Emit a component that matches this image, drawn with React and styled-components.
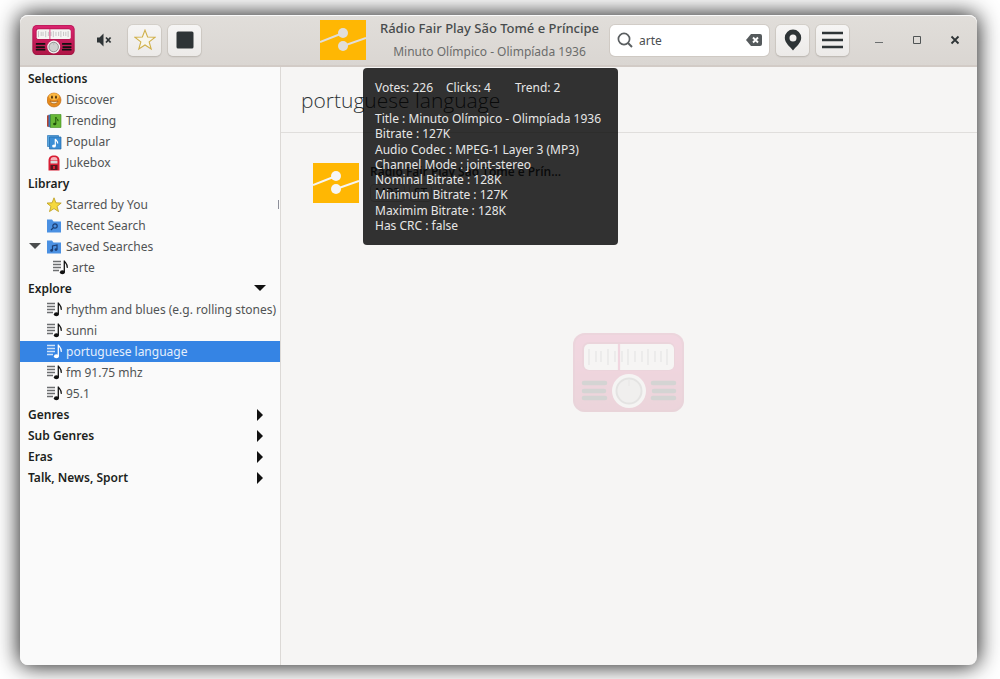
import React from "react";
import styled, { createGlobalStyle, css } from "styled-components";

const GlobalStyle = createGlobalStyle`
  *, *::before, *::after { box-sizing: border-box; }
  body {
    margin: 0;
    background: #fff;
    color: #2e3436;
    font-family: "Noto Sans", "Open Sans", sans-serif;
    font-size: 12px;
  }
  button, input { font: inherit; color: inherit; }
  h1, h2, p, ul { margin: 0; padding: 0; }
  ul { list-style: none; }
`;

const Page = styled.div`
  display: flex;
  min-height: 100vh;
  padding: 15px 23px 14px 20px;
`;

const Window = styled.div`
  flex: 1;
  min-width: 0;
  display: flex;
  flex-direction: column;
  border-radius: 8px;
  background: #f6f5f4;
  box-shadow: 0 0 22px 1px rgba(0, 0, 0, 0.9);
`;

const HeaderBar = styled.header`
  display: flex;
  align-items: center;
  gap: 7px;
  height: 52px;
  padding: 0 13px 0 12px;
  border-bottom: 2px solid #d2cbc6;
  border-radius: 8px 8px 0 0;
  background: linear-gradient(#e1deda, #dad6d2);
  box-shadow: inset 0 1px #fafafa;
`;

const Logo = styled.div`
  display: flex;
  width: 47px;
`;

const FlatButton = styled.button`
  display: flex;
  align-items: center;
  justify-content: center;
  width: ${(p) => p.$width || 31}px;
  height: 31px;
  padding: 0;
  border: 0;
  background: none;
`;

const RaisedButton = styled(FlatButton)`
  width: 33px;
  flex: none;
  border-radius: 5px;
  background: linear-gradient(#f6f5f4, #eceae8);
  box-shadow: 0 0 0 1px rgba(180, 170, 160, 0.25), 0 1px 2px rgba(0, 0, 0, 0.14);
`;

const NowPlaying = styled.div`
  flex: 1;
  min-width: 0;
  display: flex;
  align-items: center;
  justify-content: flex-end;
  gap: 10px;
`;

const NowText = styled.div`
  min-width: 227px;
  text-align: center;
  white-space: nowrap;
  line-height: 23px;
`;

const StationName = styled.p`
  font-size: 13px;
  font-weight: 500;
  color: #484c4d;
`;

const TrackName = styled.p`
  font-size: 12px;
  color: #6b6c6b;
`;

const SearchBox = styled.div`
  display: flex;
  align-items: center;
  gap: 6px;
  width: 159px;
  height: 31px;
  padding: 0 7px;
  border-radius: 5px;
  background: #fff;
  box-shadow: 0 0 0 1px rgba(180, 170, 160, 0.3);

  input {
    flex: 1;
    min-width: 0;
    padding: 0;
    border: 0;
    outline: 0;
    background: none;
    color: #4a4e50;
  }
`;

const WindowControls = styled.div`
  display: flex;
  gap: 7px;
  margin-left: 7px;
  margin-right: -6px;
`;

const Body = styled.div`
  flex: 1;
  display: flex;
`;

const Sidebar = styled.nav`
  flex: none;
  width: 261px;
  padding-top: 1px;
  border-right: 1px solid #dcd9d6;
  border-radius: 0 0 0 8px;
  background: #fafafa;
`;

const rowStyle = css`
  display: flex;
  align-items: center;
  width: 100%;
  height: 21px;
  border: 0;
  background: none;
  white-space: nowrap;
`;

const SectionRow = styled.button`
  ${rowStyle}
  justify-content: space-between;
  padding: 0 14px 0 8px;
  color: #1c1f20;
  font-weight: 600;
`;

const ItemRow = styled.a`
  ${rowStyle}
  gap: 3px;
  padding-left: ${(p) => (p.$expanded ? 9 : p.$nested ? 33 : 27)}px;
  color: ${(p) => (p.$active ? "#e4effc" : "#505354")};
  background: ${(p) => (p.$active ? "#3584e4" : "none")};
  text-decoration: none;

  > svg { flex: none; }
  > svg:first-child { margin-right: ${(p) => (p.$expanded ? 3 : 0)}px; }
`;

const ScrollMark = styled.span`
  width: 1px;
  height: 9px;
  margin-left: auto;
  margin-right: 1px;
  background: #8d8f9a;
`;

const Main = styled.main`
  flex: 1;
  min-width: 0;
  display: grid;
`;

const Watermark = styled.div`
  grid-area: 1 / 1;
  place-self: center;
  display: flex;
  padding: 12px 2px 0 0;
  opacity: 0.14;
`;

const Content = styled.div`
  grid-area: 1 / 1;
  position: relative;
`;

const PageTitle = styled.h1`
  height: 66px;
  padding-left: 20px;
  border-bottom: 1px solid #e0dedc;
  font-family: "Open Sans", sans-serif;
  font-size: 21px;
  font-weight: 300;
  line-height: 66px;
`;

const StationCard = styled.article`
  display: flex;
  gap: 11px;
  padding: 29px 32px;
`;

const CardText = styled.div`
  display: flex;
  flex-direction: column;
  gap: 2px;
  h2 {
    font-family: "Open Sans", sans-serif;
    font-size: 12px;
    font-weight: 600;
    line-height: 20px;
  }
`;

const Badges = styled.div`
  display: flex;
  gap: 4px;
  span {
    padding: 0 4px;
    border: 1px solid #cfccc9;
    border-radius: 4px;
    line-height: 16px;
  }
`;

const Tooltip = styled.div`
  position: absolute;
  top: 1px;
  left: 82px;
  display: flex;
  flex-direction: column;
  gap: 15px;
  width: 255px;
  height: 177px;
  padding: 12px;
  border-radius: 4px;
  background: rgba(0, 0, 0, 0.8);
  color: #e6e6e6;
  line-height: 16px;
  white-space: nowrap;
`;

const Stats = styled.div`
  display: flex;
  gap: 13px;
  span:last-child { margin-left: 11px; }
`;

const StreamInfo = styled.ul`
  flex: 1;
  display: flex;
  flex-direction: column;
  justify-content: space-between;
  li { line-height: 15px; }
`;

const TICKS = [
  [16, 1], [23, 0], [28, 0], [35, 1], [42, 0], [49, 0], [55, 1],
  [62, 0], [69, 0], [75, 1], [82, 0], [88, 0], [94, 1],
];

function Radio({ id, width, height }) {
  return (
    <svg width={width} height={height} viewBox="0 0 111 79" aria-hidden="true">
      <defs>
        <linearGradient id={id} x1="0" y1="0" x2="0" y2="1">
          <stop offset="0" stopColor="#dc2470" />
          <stop offset="1" stopColor="#b01646" />
        </linearGradient>
      </defs>
      <rect width="111" height="79" rx="12" fill={`url(#${id})`} />
      <rect x="1" y="1" width="109" height="77" rx="11" fill="none" stroke="#8c1039" strokeWidth="2" opacity="0.5" />
      <rect x="9" y="9" width="93" height="29" rx="7" fill="#b0124c" />
      <rect x="11" y="11" width="90" height="26" rx="5" fill="#f6f5f4" />
      {TICKS.map(([x, long]) => (
        <path key={x} d={long ? `M${x} 16v16` : `M${x} 18v11`} stroke="#b0b0b0" strokeWidth="1.800" />
      ))}
      <path d="M46 11v26" stroke="#d8206c" strokeWidth="2.200" />
      <path
        d="M11 50h21M11 58h20M11 65h21M80 50h21M81 58h20M80 65h21"
        stroke="#111"
        strokeWidth="4.600"
        strokeLinecap="round"
      />
      <circle cx="56" cy="58" r="17" fill="#f2f2f2" />
      <circle cx="56" cy="58" r="12.500" fill="#d0d0d0" stroke="#7d7d7d" strokeWidth="2" />
      <path d="M56 47v6" stroke="#aaa" strokeWidth="1.400" />
    </svg>
  );
}

function StationArt({ line = "#f6f5f4" }) {
  return (
    <svg width="46" height="42" viewBox="0 0 46 42" aria-hidden="true">
      <path fill="#ffb703" d="M0 1h46v40H0z" />
      <path d="M0 23 23 14M23 27 46 19" stroke={line} strokeWidth="2" />
      <circle cx="23" cy="14" r="5" fill={line} />
      <circle cx="23" cy="27" r="5" fill={line} />
    </svg>
  );
}

const STAR = "M8 .8 9.900 5.800 15.200 6.050 11.040 9.400 12.500 14.550 8 11.600 3.500 14.550 4.960 9.400.8 6.050 6.100 5.800z";

function PlaylistIcon({ light }) {
  return (
    <svg width="16" height="16" viewBox="0 0 16 16" aria-hidden="true">
      <path
        d="M0 1.500h8M0 4.500h8M0 7.500h8M0 10.500h6"
        stroke={light ? "#cfe2f9" : "#6c6e70"}
        strokeWidth="1.300"
      />
      <path d="M11.300 12V.5c.4 2.400 3.800 3.400 3 7.300" fill="none" stroke={light ? "#fff" : "#111"} strokeWidth="1.300" />
      <ellipse cx="9.400" cy="12.300" rx="2.500" ry="2" fill={light ? "#fff" : "#111"} />
    </svg>
  );
}

function ItemIcon({ name, active }) {
  if (name === "list") return <PlaylistIcon light={active} />;
  return (
    <svg width="16" height="16" viewBox="1 0 16 16" aria-hidden="true">
      {name === "smile" && (
        <>
          <circle cx="8" cy="8" r="7" fill="#e58a1c" stroke="#b9620c" strokeWidth=".6" />
          <ellipse cx="8" cy="4.600" rx="5.200" ry="3.400" fill="#fbb842" />
          <ellipse cx="6" cy="5.200" rx=".8" ry="1.600" fill="#3b2306" />
          <ellipse cx="10" cy="5.200" rx=".8" ry="1.600" fill="#3b2306" />
          <path d="M4 9c1.400 3.600 6.600 3.600 8 0-2.500 1-5.500 1-8 0z" fill="#fff0d0" stroke="#7d3c05" strokeWidth=".5" />
        </>
      )}
      {name === "trending" && (
        <>
          <path fill="#b9422d" d="M1 2.500 3 2v12l-2-.5z" />
          <path fill="#3a78ba" d="M2.500 1.800 5 1.500v13l-2.500-.5z" />
          <path fill="#67b836" stroke="#3f8a1d" strokeWidth=".6" d="M4.500 1.500h10.500v13H4.500z" />
          <path d="M9.800 11V4.200c.6 1.600 2.600 1.800 2.200 4" fill="none" stroke="#1f5208" />
          <ellipse cx="8.700" cy="11" rx="1.600" ry="1.300" fill="#1f5208" />
        </>
      )}
      {name === "popular" && (
        <>
          <path fill="#59a7e0" stroke="#2f78b8" strokeWidth=".7" d="M1.500 1.500h11v11h-11z" />
          <path fill="#3d8fd6" stroke="#2468a6" strokeWidth=".7" d="M3.500 3h11.500v12H3.500z" />
          <path d="M9.300 12V5c.6 1.600 2.800 2 2.400 4.500" fill="none" stroke="#fff" strokeWidth="1.200" />
          <ellipse cx="8" cy="12" rx="1.900" ry="1.500" fill="#fff" />
        </>
      )}
      {name === "jukebox" && (
        <>
          <path fill="#d81e34" d="M2.500 15.500V6c0-4 2-5.500 5.500-5.500S13.500 2 13.500 6v9.500z" />
          <path fill="#f6b6bd" d="M4.500 5.500c0-2.500 1-3.500 3.500-3.500s3.500 1 3.500 3.500z" />
          <path fill="#d9d9d9" d="M4.500 6h7v2.500h-7z" />
          <path fill="#55181f" d="M4.500 10h7v5h-7z" />
          <path fill="#d81e34" d="M7 11h2v3H7z" />
        </>
      )}
      {name === "star" && <path d={STAR} fill="#f5d93f" stroke="#b99a1a" strokeWidth=".8" />}
      {(name === "search" || name === "saved") && (
        <path d="M1 1.500h5l1.500 2H15v11H1z" fill="#4a90e2" />
      )}
      {name === "search" && (
        <>
          <circle cx="9" cy="8" r="2.200" fill="none" stroke="#1d3f75" strokeWidth="1.200" />
          <path d="M7.400 9.600 5 12" stroke="#1d3f75" strokeWidth="1.300" />
        </>
      )}
      {name === "saved" && (
        <>
          <path d="M6.500 11.500V7l4.500-1v4.500" fill="none" stroke="#1d3f75" strokeWidth="1.200" />
          <circle cx="5.600" cy="11.400" r="1.400" fill="#1d3f75" />
          <circle cx="10" cy="10.600" r="1.400" fill="#1d3f75" />
        </>
      )}
    </svg>
  );
}

function Arrow({ down, color = "#111" }) {
  return (
    <svg width="12" height="12" viewBox="0 0 12 12" aria-hidden="true">
      <path d={down ? "M0 2h12L6 8z" : "M3 0v12l6-6z"} fill={color} />
    </svg>
  );
}

const SECTIONS = [
  {
    title: "Selections",
    items: [
      { label: "Discover", icon: "smile" },
      { label: "Trending", icon: "trending" },
      { label: "Popular", icon: "popular" },
      { label: "Jukebox", icon: "jukebox" },
    ],
  },
  {
    title: "Library",
    items: [
      { label: "Starred by You", icon: "star", mark: true },
      { label: "Recent Search", icon: "search" },
      { label: "Saved Searches", icon: "saved", expanded: true },
      { label: "arte", icon: "list", nested: true },
    ],
  },
  {
    title: "Explore",
    arrow: "down",
    items: [
      { label: "rhythm and blues (e.g. rolling stones)", icon: "list" },
      { label: "sunni", icon: "list" },
      { label: "portuguese language", icon: "list", active: true },
      { label: "fm 91.75 mhz", icon: "list" },
      { label: "95.1", icon: "list" },
    ],
  },
  { title: "Genres", arrow: "right", items: [] },
  { title: "Sub Genres", arrow: "right", items: [] },
  { title: "Eras", arrow: "right", items: [] },
  { title: "Talk, News, Sport", arrow: "right", items: [] },
];

const STREAM = [
  "Title : Minuto Olímpico - Olimpíada 1936",
  "Bitrate : 127K",
  "Audio Codec : MPEG-1 Layer 3 (MP3)",
  "Channel Mode : joint-stereo",
  "Nominal Bitrate : 128K",
  "Minimum Bitrate : 127K",
  "Maximim Bitrate : 128K",
  "Has CRC : false",
];

export default function App() {
  return (
    <>
      <GlobalStyle />
      <Page>
        <Window>
          <HeaderBar>
            <Logo><Radio id="logo" width={43} height={30} /></Logo>
            <FlatButton $width={35} aria-label="Mute">
              <svg width="16" height="16" viewBox="0 0 16 16">
                <path d="M1 5.500h2.500L7.500 1.500v13l-4-4H1z" fill="#2e3436" />
                <path d="m10 5.500 4.600 5M14.600 5.500l-4.600 5" stroke="#2e3436" strokeWidth="1.800" />
              </svg>
            </FlatButton>
            <RaisedButton aria-label="Star station">
              <svg width="22" height="22" viewBox="0 0 16 16">
                <path d={STAR} fill="#f8f6ec" stroke="#d0b04a" strokeWidth=".8" />
              </svg>
            </RaisedButton>
            <RaisedButton aria-label="Stop">
              <svg width="18" height="18" viewBox="0 0 18 18">
                <rect x=".5" y=".5" width="17" height="17" rx="1.500" fill="#2e3436" />
              </svg>
            </RaisedButton>
            <NowPlaying>
              <StationArt line="#e1deda" />
              <NowText>
                <StationName>Rádio Fair Play São Tomé e Príncipe</StationName>
                <TrackName>Minuto Olímpico - Olimpíada 1936</TrackName>
              </NowText>
            </NowPlaying>
            <SearchBox>
              <svg width="16" height="16" viewBox="0 0 16 16" aria-hidden="true">
                <circle cx="7" cy="7" r="5.600" fill="none" stroke="#5a5e60" strokeWidth="1.700" />
                <path d="m11 11 4 4" stroke="#5a5e60" strokeWidth="2" />
              </svg>
              <input aria-label="Search stations" defaultValue="arte" />
              <FlatButton $width={16} aria-label="Clear search">
                <svg width="16" height="12" viewBox="0 0 16 12">
                  <path d="M5 0h9a2 2 0 0 1 2 2v8a2 2 0 0 1-2 2H5L0 6z" fill="#555a5c" />
                  <path d="m7 3.500 5 5M12 3.500l-5 5" stroke="#fff" strokeWidth="1.900" />
                </svg>
              </FlatButton>
            </SearchBox>
            <RaisedButton aria-label="Location">
              <svg width="18" height="22" viewBox="0 0 18 22">
                <path
                  fillRule="evenodd"
                  fill="#2e3436"
                  d="M9 .5a8.200 8.200 0 0 1 8.200 8.200C17.200 14 12 17.500 9 21.500 6 17.500.8 14 .8 8.700A8.200 8.200 0 0 1 9 .5zm0 5a3.500 3.500 0 1 0 0 7 3.500 3.500 0 0 0 0-7z"
                />
              </svg>
            </RaisedButton>
            <RaisedButton aria-label="Menu">
              <svg width="21" height="18" viewBox="0 0 21 18">
                <path d="M0 2h21M0 9h21M0 16h21" stroke="#2e3436" strokeWidth="2.400" />
              </svg>
            </RaisedButton>
            <WindowControls>
              <FlatButton aria-label="Minimize">
                <svg width="10" height="10" viewBox="0 0 10 10"><path d="M1 7.500h8" stroke="#6b6e6f" /></svg>
              </FlatButton>
              <FlatButton aria-label="Maximize">
                <svg width="10" height="10" viewBox="0 0 10 10">
                  <path d="M1.500 1.500h7v7h-7z" fill="none" stroke="#505455" />
                </svg>
              </FlatButton>
              <FlatButton aria-label="Close">
                <svg width="10" height="10" viewBox="0 0 10 10">
                  <path d="m1.500 1.500 7 7M8.500 1.500l-7 7" stroke="#2e3436" strokeWidth="1.800" />
                </svg>
              </FlatButton>
            </WindowControls>
          </HeaderBar>
          <Body>
            <Sidebar>
              {SECTIONS.map((section) => (
                <React.Fragment key={section.title}>
                  <SectionRow>
                    {section.title}
                    {section.arrow && <Arrow down={section.arrow === "down"} />}
                  </SectionRow>
                  {section.items.map((item) => (
                    <ItemRow
                      key={item.label}
                      href="#"
                      $active={item.active}
                      $nested={item.nested}
                      $expanded={item.expanded}
                    >
                      {item.expanded && <Arrow down color="#4a4d4e" />}
                      <ItemIcon name={item.icon} active={item.active} />
                      {item.label}
                      {item.mark && <ScrollMark />}
                    </ItemRow>
                  ))}
                </React.Fragment>
              ))}
            </Sidebar>
            <Main>
              <Watermark><Radio id="watermark" width={111} height={79} /></Watermark>
              <Content>
                <PageTitle>portuguese language</PageTitle>
                <StationCard>
                  <StationArt />
                  <CardText>
                    <h2>Rádio Fair Play São Tomé e Prín…</h2>
                    <Badges><span>MP3</span><span>ST</span></Badges>
                  </CardText>
                </StationCard>
                <Tooltip role="tooltip">
                  <Stats>
                    <span>Votes: 226</span>
                    <span>Clicks: 4</span>
                    <span>Trend: 2</span>
                  </Stats>
                  <StreamInfo>
                    {STREAM.map((line) => <li key={line}>{line}</li>)}
                  </StreamInfo>
                </Tooltip>
              </Content>
            </Main>
          </Body>
        </Window>
      </Page>
    </>
  );
}
